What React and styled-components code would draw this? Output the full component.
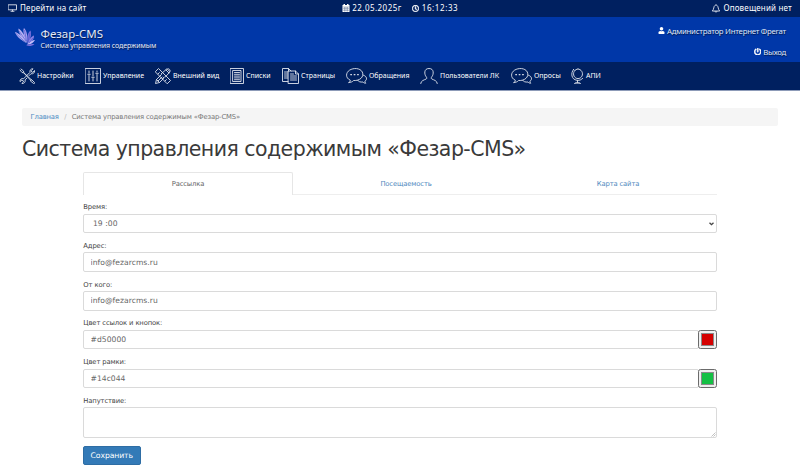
import React, { useState } from "react";
import styled, { createGlobalStyle } from "styled-components";
import { FaUser, FaPowerOff, FaRegClock } from "react-icons/fa";

const GlobalStyle = createGlobalStyle`
  * {
    box-sizing: border-box;
  }

  body {
    margin: 0;
    background: #fff;
    color: #444;
    font-family: "DejaVu Sans", Verdana, sans-serif;
    font-size: 6.8px;
    overflow: hidden;
  }
`;

const TopBar = styled.div`
  display: grid;
  grid-template-columns: 1fr auto 1fr;
  align-items: center;
  height: 16.5px;
  padding: 0 8px;
  background: #002060;
  color: #fff;
  font-family: "Noto Sans", sans-serif;
  font-size: 8px;
  line-height: 16px;
  white-space: nowrap;
`;

const TopItem = styled.span`
  display: flex;
  align-items: center;
  gap: ${props => props.$gap || "3px"};
  justify-content: ${props => (props.$end ? "flex-end" : "flex-start")};
  letter-spacing: ${props => props.$spacing || "0.18px"};
`;

const TopCenter = styled.div`
  display: flex;
  gap: 10px;
`;

const Header = styled.header`
  display: flex;
  justify-content: space-between;
  height: 45px;
  padding: 0 14px 0 15px;
  background: #0037a8;
  color: #fff;
  font-family: "Noto Sans", "Open Sans", sans-serif;
  text-shadow: 0.5px 0.5px 1px rgba(0, 0, 0, 0.6);
  white-space: nowrap;
`;

const Brand = styled.div`
  display: flex;
  gap: 4.5px;
  padding-top: 9.5px;
`;

const BrandName = styled.div`
  color: #e3e9f6;
  font-size: 11.5px;
  line-height: 15px;
`;

const BrandNote = styled.div`
  color: #e3e9f6;
  font-size: 7px;
  line-height: 10px;
  letter-spacing: -0.08px;
`;

const Account = styled.div`
  display: flex;
  flex-direction: column;
  align-items: flex-end;
  gap: 11px;
  padding-top: 9px;
  color: #dfe6f5;
  font-size: 7.8px;
  line-height: 10px;
`;

const AccountLink = styled.span`
  display: flex;
  align-items: center;
  gap: 2px;
  letter-spacing: -0.25px;

  svg {
    color: #fff;
  }
`;

const Nav = styled.nav`
  display: flex;
  gap: 11px;
  align-items: center;
  height: 29px;
  padding: 0 19px;
  background: #002060;
  border-bottom: 0.5px solid #8d9bb8;
  color: #fff;
  font-family: "Noto Sans", sans-serif;
  font-size: 7px;
`;

const NavItem = styled.a`
  display: flex;
  align-items: center;
  gap: 2px;
  white-space: nowrap;
`;

const NavLabel = styled.span`
  width: ${props => props.$width}px;
`;

const LineIcon = styled.svg`
  flex: none;
  fill: none;
  stroke: #dfe3ec;
  stroke-width: 0.9;
  stroke-linecap: round;
  stroke-linejoin: round;
`;

const Content = styled.main`
  padding: 17.5px 22px 0;
`;

const Breadcrumb = styled.div`
  display: flex;
  align-items: center;
  gap: 5.4px;
  height: 18px;
  padding: 0 8.5px;
  border-radius: 2px;
  background: #f5f5f5;
  font-size: 6.8px;
`;

const Crumb = styled.span`
  color: ${props => props.$color || "#777"};
  letter-spacing: -0.15px;
`;

const Title = styled.h1`
  margin: 9.5px 0 10.5px;
  color: #3a3a3a;
  font-size: 20.5px;
  font-weight: 400;
  line-height: 26px;
  letter-spacing: -0.54px;
  white-space: nowrap;
`;

const Panel = styled.div`
  width: 634px;
  margin: 0 auto;
`;

const Tabs = styled.div`
  display: grid;
  grid-template-columns: 210px 226px 198px;
  height: 22.5px;
  border-bottom: 1px solid #eee;
  margin-bottom: 8.5px;
`;

const Tab = styled.button`
  height: 22.5px;
  padding: 0;
  border: 1px solid ${props => (props.$active ? "#e6e6e6" : "transparent")};
  border-bottom: 0;
  border-radius: 2px 2px 0 0;
  background: ${props => (props.$active ? "#fff" : "transparent")};
  color: ${props => (props.$active ? "#666" : "#5089be")};
  font: inherit;
  letter-spacing: -0.14px;
`;

const Field = styled.div`
  height: ${props => (props.$tall ? "49px" : "38.75px")};
`;

const Label = styled.label`
  display: block;
  height: 10.6px;
  padding-left: 0.3px;
  line-height: 9.5px;
  letter-spacing: -0.12px;
`;

const Row = styled.div`
  display: flex;
  position: relative;
`;

const Input = styled.input`
  flex: 1;
  min-width: 0;
  height: 19.5px;
  padding: 0 6.5px;
  border: 1px solid #dadada;
  border-radius: 2px;
  background: #fff;
  color: #666;
  font: inherit;
  font-size: 7.6px;
  letter-spacing: 0.04px;
  outline: 0;
`;

const Select = styled(Input).attrs({ as: "select" })`
  padding-left: 9px;
  appearance: none;
`;

const Chevron = styled.svg`
  position: absolute;
  top: 8px;
  right: 3px;
  fill: none;
  stroke: #444;
  stroke-width: 1.3;
  pointer-events: none;
`;

const TextArea = styled.textarea`
  display: block;
  width: 100%;
  height: 30.5px;
  border: 1px solid #dadada;
  border-radius: 2px;
  outline: 0;
  resize: none;
`;

const Grip = styled.svg`
  position: absolute;
  right: 1px;
  bottom: 1px;
  stroke: #999;
  stroke-width: 0.6;
  pointer-events: none;
`;

const ColorButton = styled.button`
  width: 19.5px;
  height: 19.5px;
  margin-left: -1px;
  padding: 2px;
  border: 1px solid #6b6b6b;
  border-radius: 2.5px;
  background: #efefef;
`;

const Swatch = styled.span`
  display: block;
  height: 13px;
  border: 1px solid #8a8a8a;
  background: ${props => props.$color};
`;

const SaveButton = styled.button`
  display: block;
  width: 57.5px;
  height: 19.5px;
  padding: 0;
  border: 1px solid #2e6da4;
  border-radius: 2px;
  background: #337ab7;
  color: #fff;
  font: inherit;
  font-size: 7.7px;
  letter-spacing: -0.1px;
`;

const Logo = () => (
  <svg width="21" height="21" viewBox="0 0 21 21">
    <g fill="#b9b2f4">
      <path d="M11 17C6 14 1 10 0 6C4 7 9 12 11 17Z" />
      <path d="M11.500 17C7 12 3 6 3.500 2.500C7 4.500 11 11 11.500 17Z" />
      <path d="M12 17C9 10 7.500 5 9 2C12 5 13 11 12 17Z" fill="#a79ff0" />
      <path d="M12.500 17.500C12 11 12.500 7 15.500 4.500C17 9 15 14 12.500 17.500Z" fill="#7770dc" />
      <path d="M12.500 18C14 13 16 11 19 9.500C19 13.500 16 17 12.500 18Z" fill="#8c83e6" />
      <path d="M12 18.500C15 15.500 18 14 20 14C18.500 17 15 19 12 18.500Z" fill="#c3bcfa" />
      <path d="M11 19C14 18 17 18 19.500 18C17 20.500 13 20.500 11 19Z" fill="#786fda" />
    </g>
    <path
      d="M1 7.500L10 16M4 5L11 15M9.500 4l2 11M15 7L13 16M18 12L14 17"
      stroke="#4250c7"
      strokeWidth=".6"
      fill="none"
    />
  </svg>
);

const CalendarIcon = () => (
  <svg width="8" height="8" viewBox="0 0 16 16" fill="#fff">
    <path d="M1 2h2V0h3v2h4V0h3v2h2v14H1z" />
    <path
      d="M2 6h12M2 9.300h12M2 12.600h12M5 6v9M8 6v9M11 6v9"
      stroke="#53668f"
      strokeWidth="0.9"
    />
  </svg>
);

const icons = {
  tools: {
    width: 16,
    d: "M2 1l2.500 2 .3 1.700 7.500 7M1 2l2 2.500 1.700.3 7 7.500M11.500 12.500l1-1 3 3c.4 1-.5 1.500-1 1zM9.200 6.200l1.800-1.800c-.6-2 1-3.900 3-3.600l-1.800 1.900.3 1.200 1.300.4L15.500 2.500c.5 2.200-1.500 3.800-3.500 3.200L10.100 7.600M9.200 6.200L4.700 10.600c-2-.6-4 .8-3.700 3l1.800-1.400 1.300.4.4 1.300-1.700 1.600c2.300.3 3.900-1.500 3.300-3.600l1.800-1.800"
  },
  sliders: {
    width: 16,
    d: "M.5.5h15v15H.5zM4 3v2M4 7.500V13M2.800 6.300h2.400M8 3v5M8 10.500V13M6.800 9.300h2.400M12 3v1M12 6.500V13M10.800 5.300h2.400"
  },
  design: {
    width: 16,
    d: "M.5 3.500L3.500.5l12 12-3 3zM3 6l1.400-1.400M5 8l1.400-1.400M7.500 10.500L9 9M10 13l1.400-1.400M6.200 5.800L12 .8l3 3-5 5.500M11 2l3 3M12.500.8c1-1 3.500 1.500 2.500 2.500M5.500 7.500l-4 4-1 4 4-1 4-4M1.500 11.500l3 3M3 13l4-4"
  },
  list: {
    width: 14,
    d: "M.5.5h13v15H.5zM3 2.500h8v11H3zM4.500 4.500h5M4.500 6.300h5M4.500 8.100h5M4.500 9.900h5M4.500 11.700h5"
  },
  pages: {
    width: 17,
    d: "M6 13.500H.5V.5h6L9 3M6.500.5V3M2.500 4h3.200M2.500 6h3.200M2.500 8h3.200M2.500 10h3.200M6.500 3h7l3 3v9.500h-10zM13.500 3v3h3M8.500 6h3M8.500 8h6M8.500 10h6M8.500 12h6"
  },
  chat: {
    width: 21,
    d: "M3 14.500c.9-.5 1.200-1.200 1.300-2.300C-1 9.800-.1 4.500 3.500 2.200 7.500-.3 14-.2 16.300 4c2.200 5-2.800 9-8.700 8.500C6.500 13.800 4.700 14.500 3 14.500zM17.500 7.200c3.500 1 4 4.500 1.400 6 0 .8.3 1.500.9 2-1.200.1-2.200-.4-2.800-1.200-2.600.3-4.500-.3-5.300-1.600M4.800 6.500h.7M8.200 6.500h.7M11.600 6.500h.7M4.800 6.800h.7M8.200 6.800h.7M11.600 6.800h.7"
  },
  user: {
    width: 18,
    d: "M.7 15.500c.2-3 3.500-3.500 5.500-4.500.8-.5.700-1.400 0-2.200-2-2.400-2.500-8.300 2.800-8.300s4.800 5.900 2.800 8.300c-.7.800-.8 1.700 0 2.200 2 1 5.300 1.500 5.500 4.500"
  },
  globe: {
    width: 13,
    d: "M7 1a4.500 4.800 0 1 0 .01 0M2.500 1.500c-3 3.500-2.300 10 3.500 10.800 2.500.4 4.600-.6 5.700-2M2.500 1.500l.7.800M6.500 12.500v2M3.500 15.500c0-1.500 6-1.500 6 0z"
  }
};

const NavIcon = ({ name }) => (
  <LineIcon
    width={icons[name].width}
    height="16"
    viewBox={`0 0 ${icons[name].width} 16`}
  >
    <path d={icons[name].d} />
  </LineIcon>
);

const menu = [
  { icon: "tools", label: "Настройки", width: 37 },
  { icon: "sliders", label: "Управление", width: 41 },
  { icon: "design", label: "Внешний вид", width: 46 },
  { icon: "list", label: "Списки", width: 25 },
  { icon: "pages", label: "Страницы", width: 34 },
  { icon: "chat", label: "Обращения", width: 40 },
  { icon: "user", label: "Пользователи ЛК", width: 60 },
  { icon: "chat", label: "Опросы", width: 26 },
  { icon: "globe", label: "АПИ", width: 15 }
];

const tabs = ["Рассылка", "Посещаемость", "Карта сайта"];

const ColorField = ({ label, initial }) => {
  const [value, setValue] = useState(initial);

  return (
    <Field>
      <Label>{label}</Label>
      <Row>
        <Input value={value} onChange={e => setValue(e.target.value)} />
        <ColorButton type="button">
          <Swatch $color={value} />
        </ColorButton>
      </Row>
    </Field>
  );
};

const App = () => {
  const [active, setActive] = useState(0);

  return (
    <>
      <GlobalStyle />
      <TopBar>
        <TopItem>
          <LineIcon width="9" height="8" viewBox="0 0 9 8">
            <path d="M.5.8h8v5h-8zM3 7.300h3M4.500 6v1" />
          </LineIcon>
          Перейти на сайт
        </TopItem>
        <TopCenter>
          <TopItem $gap="2.5px" $spacing="0.46px">
            <CalendarIcon />
            22.05.2025г
          </TopItem>
          <TopItem $gap="3px" $spacing="0.6px">
            <FaRegClock size={7} stroke="#fff" strokeWidth="35" />
            16:12:33
          </TopItem>
        </TopCenter>
        <TopItem $end>
          <LineIcon width="8" height="9" viewBox="0 0 8 9">
            <path d="M.6 6.800c1.400-1 1-4.800 2.400-5.400l1-.7 1 .7c1.400.6 1 4.400 2.400 5.400zM3 7.500c.3 1 1.700 1 2 0" />
          </LineIcon>
          Оповещений нет
        </TopItem>
      </TopBar>
      <Header>
        <Brand>
          <Logo />
          <div>
            <BrandName>Фезар-CMS</BrandName>
            <BrandNote>Система управления содержимым</BrandNote>
          </div>
        </Brand>
        <Account>
          <AccountLink>
            <FaUser size={7} />
            Администратор Интернет Фрегат
          </AccountLink>
          <AccountLink>
            <FaPowerOff size={7.5} stroke="#fff" strokeWidth="25" />
            Выход
          </AccountLink>
        </Account>
      </Header>
      <Nav>
        {menu.map(item => (
          <NavItem key={item.label}>
            <NavIcon name={item.icon} />
            <NavLabel $width={item.width}>{item.label}</NavLabel>
          </NavItem>
        ))}
      </Nav>
      <Content>
        <Breadcrumb>
          <Crumb $color="#4b8bc3">Главная</Crumb>
          <Crumb $color="#bbb">/</Crumb>
          <Crumb>Система управления содержимым «Фезар-CMS»</Crumb>
        </Breadcrumb>
        <Title>Система управления содержимым «Фезар-CMS»</Title>
        <Panel>
          <Tabs>
            {tabs.map((tab, i) => (
              <Tab key={tab} $active={i === active} onClick={() => setActive(i)}>
                {tab}
              </Tab>
            ))}
          </Tabs>
          <Field>
            <Label>Время:</Label>
            <Row>
              <Select>
                <option>19 :00</option>
              </Select>
              <Chevron width="5" height="4" viewBox="0 0 5 4">
                <path d="M.5.700l2 2 2-2" />
              </Chevron>
            </Row>
          </Field>
          <Field>
            <Label>Адрес:</Label>
            <Row>
              <Input defaultValue="info@fezarcms.ru" />
            </Row>
          </Field>
          <Field>
            <Label>От кого:</Label>
            <Row>
              <Input defaultValue="info@fezarcms.ru" />
            </Row>
          </Field>
          <ColorField label="Цвет ссылок и кнопок:" initial="#d50000" />
          <ColorField label="Цвет рамки:" initial="#14c044" />
          <Field $tall>
            <Label>Напутствие:</Label>
            <Row>
              <TextArea />
              <Grip width="5" height="5" viewBox="0 0 5 5">
                <path d="M.5 4.500l4-4M2.500 4.500l2-2" />
              </Grip>
            </Row>
          </Field>
          <SaveButton>Сохранить</SaveButton>
        </Panel>
      </Content>
    </>
  );
};

export default App;
